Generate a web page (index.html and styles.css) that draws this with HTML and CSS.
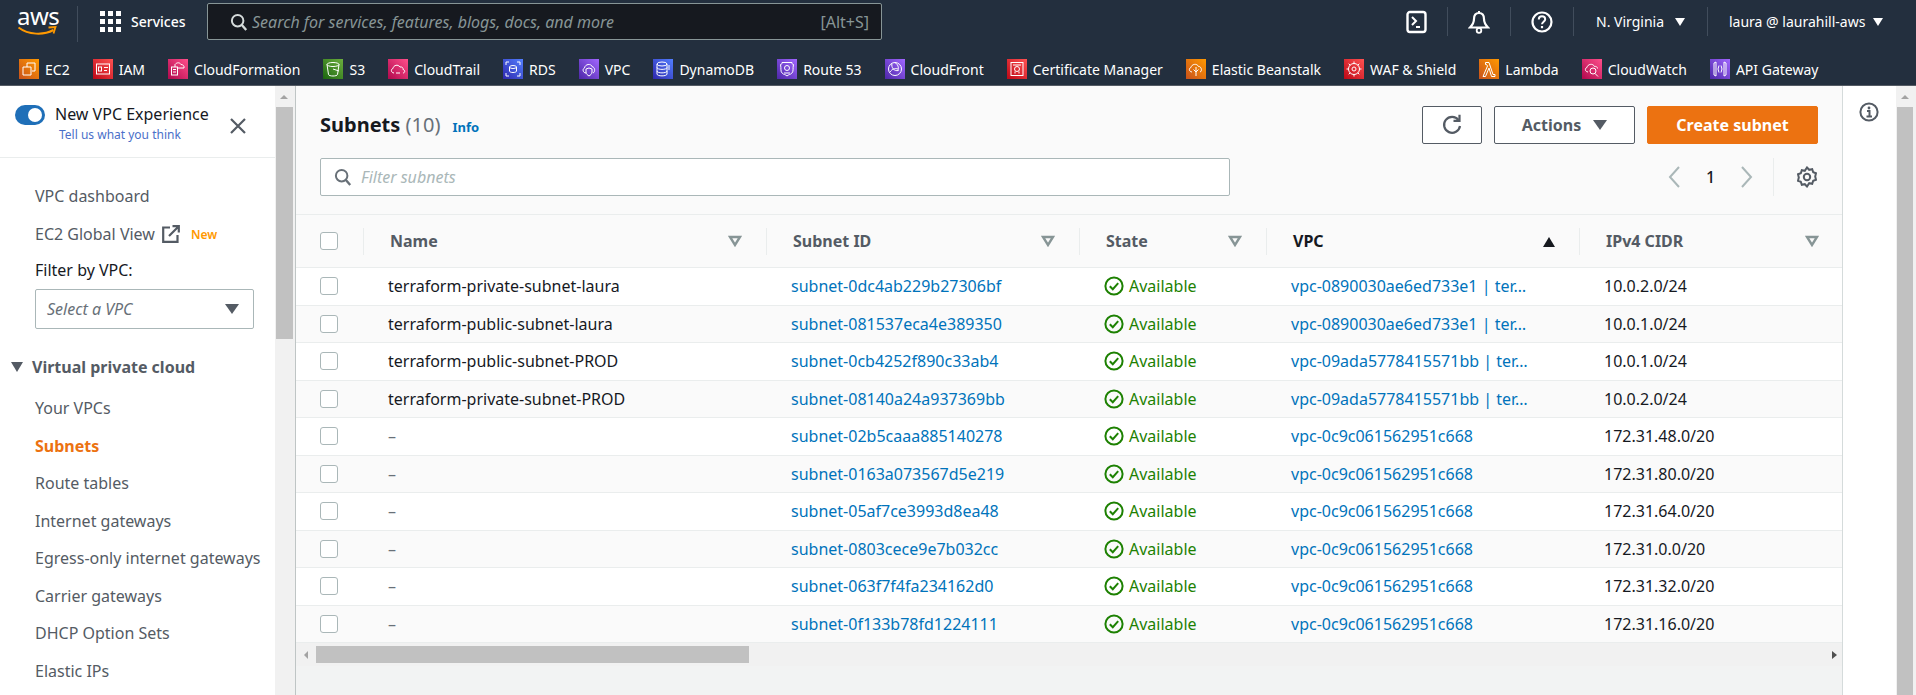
FILE: index.html
```html
<!DOCTYPE html>
<html lang="en">
<head>
    <meta charset="UTF-8">
    <meta name="viewport" content="width=device-width, initial-scale=1.0">
    <title>Subnets | VPC Console</title>
    <link rel="stylesheet" href="styles.css">
</head>
<body>
    <!-- Shared icons -->
    <svg class="sprite" aria-hidden="true">
        <symbol id="i-check" viewBox="0 0 20 20">
            <circle cx="10" cy="10" r="8.6" fill="none" stroke="#1d8102" stroke-width="2"/>
            <path d="M5.8 10.2l3 3 5.4-6" fill="none" stroke="#1d8102" stroke-width="2"/>
        </symbol>
        <symbol id="i-filter" viewBox="0 0 14 12">
            <path d="M2 2h10l-5 8z" fill="none" stroke="#879596" stroke-width="2.4"/>
        </symbol>
        <symbol id="i-search" viewBox="0 0 20 20">
            <circle cx="8.5" cy="8.5" r="6.4" fill="none" stroke="currentColor" stroke-width="2.2"/>
            <path d="M13 13l5 6" fill="none" stroke="currentColor" stroke-width="2.6"/>
        </symbol>
    </svg>

    <!-- Header Section -->
    <header class="top-nav">
        <div class="nav-row">
            <div class="aws-logo">
                <span class="aws-word">aws</span>
                <svg class="aws-smile" viewBox="0 0 40 11">
                    <path d="M1 1.5c10 7.500 25 8 35 2.500" fill="none" stroke="#ff9900" stroke-width="2"/>
                    <path d="M31 1.500l7-.5-2 6.500" fill="none" stroke="#ff9900" stroke-width="1.800"/>
                </svg>
            </div>
            <div class="services">
                <div class="grid-dots">
                    <i></i><i></i><i></i><i></i><i></i><i></i><i></i><i></i><i></i>
                </div>
                <span>Services</span>
            </div>
            <div class="global-search">
                <svg class="search-icon"><use href="#i-search"/></svg>
                <span class="search-text">Search for services, features, blogs, docs, and more</span>
                <span class="search-key">[Alt+S]</span>
            </div>
            <div class="nav-right">
                <div class="nav-icon">
                    <svg width="21" height="24" viewBox="0 0 21 24"><rect x="1.500" y="2" width="18" height="20" rx="2.500" fill="none" stroke="#fff" stroke-width="2.400"/><path d="M6 7l4 4-4 4" fill="none" stroke="#fff" stroke-width="2"/><path d="M10 17h4" stroke="#fff" stroke-width="2"/></svg>
                </div>
                <div class="nav-icon">
                    <svg width="22" height="24" viewBox="0 0 22 24"><path d="M11 3c-3.500 0-5 2.500-5 6 0 4-1.500 6-4 8.500h18c-2.500-2.500-4-4.500-4-8.500 0-3.500-1.500-6-5-6z" fill="none" stroke="#fff" stroke-width="2.200"/><path d="M11 1v2" stroke="#fff" stroke-width="2"/><circle cx="11" cy="20.500" r="2.300" fill="none" stroke="#fff" stroke-width="1.800"/></svg>
                </div>
                <div class="nav-icon">
                    <svg width="22" height="22" viewBox="0 0 22 22"><circle cx="11" cy="11" r="9.500" fill="none" stroke="#fff" stroke-width="2.200"/><path d="M7.800 8.500c0-2 1.400-3.200 3.200-3.200s3.200 1.200 3.200 3c0 2.400-3.200 2.500-3.200 5" fill="none" stroke="#fff" stroke-width="2"/><path d="M11 15v2.200" stroke="#fff" stroke-width="2.200"/></svg>
                </div>
                <div class="nav-menu region"><span>N. Virginia</span><i class="caret-white"></i></div>
                <div class="nav-menu account"><span>laura @ laurahill-aws</span><i class="caret-white"></i></div>
            </div>
        </div>
        <nav class="fav-row">
            <a class="fav fav-ec2"><span class="svc orange"><svg viewBox="0 0 20 20"><path d="M8 4h8v8h-3M4 8h8v8H4z"/><path d="M8 8V4"/></svg></span>EC2</a>
            <a class="fav fav-iam"><span class="svc red"><svg viewBox="0 0 20 20"><rect x="3.500" y="5" width="13" height="10"/><rect x="5.500" y="8" width="3" height="4"/><path d="M11 8.500h4M11 11.500h3"/></svg></span>IAM</a>
            <a class="fav fav-cf"><span class="svc pink"><svg viewBox="0 0 20 20"><rect x="3.500" y="8" width="6" height="8"/><path d="M5 10.500h3M5 13h3M7 8V5.500c2-2.500 5-2 6 0 2 0 3.500 1.500 3 3.500h-6"/></svg></span>CloudFormation</a>
            <a class="fav fav-s3"><span class="svc green"><svg viewBox="0 0 20 20"><ellipse cx="10" cy="5.500" rx="6" ry="2"/><path d="M4 5.500l1.500 10c.5 2 8.500 2 9 0l1.500-10M10 10l6 2"/></svg></span>S3</a>
            <a class="fav fav-trail"><span class="svc pink"><svg viewBox="0 0 20 20"><path d="M6 14c-3 0-3.500-4-1-4.500C5.500 6 10 5 12 8c2-.5 3.500 1 3 2.500 2.500.5 2 3.500 0 3.500"/><path d="M8 14h4"/></svg></span>CloudTrail</a>
            <a class="fav fav-rds"><span class="svc blue"><svg viewBox="0 0 20 20"><ellipse cx="10" cy="8" rx="3.500" ry="1.500"/><path d="M6.500 8v4c0 2 7 2 7 0V8M3 6V3h3M14 3h3v3M3 14v3h3M14 17h3v-3"/></svg></span>RDS</a>
            <a class="fav fav-vpc"><span class="svc purple"><svg viewBox="0 0 20 20"><path d="M7 14c-3 0-4-4-1.500-5C6 5 12 4 13.500 8c2.500 0 3 5 .5 6"/><path d="M10 9l3 1v3c0 2-1.500 3-3 4-1.500-1-3-2-3-4v-3z"/></svg></span>VPC</a>
            <a class="fav fav-ddb"><span class="svc blue"><svg viewBox="0 0 20 20"><ellipse cx="9" cy="5" rx="5" ry="2"/><path d="M4 5v10c0 2.500 10 2.500 10 0V5M4 8.500c0 2.500 10 2.500 10 0M4 12c0 2.500 10 2.500 10 0M16 6v5"/></svg></span>DynamoDB</a>
            <a class="fav fav-r53"><span class="svc purple"><svg viewBox="0 0 20 20"><path d="M5 3.500h10c0 2 1 2 1.500 2-1 4 .5 7-2 9-1 1-3 1-4.500 2.500-1.500-1.500-3.500-1.500-4.500-2.500-2.500-2-1-5-2-9 .5 0 1.500 0 1.500-2z"/><circle cx="10" cy="9" r="2.500"/><path d="M7 14h6"/></svg></span>Route 53</a>
            <a class="fav fav-cfront"><span class="svc purple"><svg viewBox="0 0 20 20"><circle cx="10" cy="10" r="6.500"/><path d="M7 4.500c-1 4 2 8 6.500 7M5 13c2-3 5-4 8-3M10 3.500c3 2 4 5 3 8"/></svg></span>CloudFront</a>
            <a class="fav fav-cert"><span class="svc red"><svg viewBox="0 0 20 20"><rect x="4" y="3.500" width="12" height="13"/><path d="M6 6h8M8 14.500v-2M12 14.500v-2"/><circle cx="10" cy="10" r="2.500"/></svg></span>Certificate Manager</a>
            <a class="fav fav-eb"><span class="svc orange"><svg viewBox="0 0 20 20"><path d="M6 13c-3 0-3.500-4-1-4.500C5.500 5 11 4 12.500 7.500c3-.5 4 5 1.500 5.500"/><path d="M10 8v9M7.500 10.500L10 13l2.500-2.500"/></svg></span>Elastic Beanstalk</a>
            <a class="fav fav-waf"><span class="svc red"><svg viewBox="0 0 20 20"><circle cx="10" cy="10" r="5.500"/><circle cx="10" cy="10" r="2"/><path d="M10 2.500v2.500M10 15v2.500M2.500 10H5M15 10h2.500M4.700 4.700l1.500 1.500M13.800 13.800l1.500 1.500M15.300 4.700l-1.500 1.500M6.200 13.800l-1.500 1.500"/></svg></span>WAF &amp; Shield</a>
            <a class="fav fav-lambda"><span class="svc orange"><svg viewBox="0 0 20 20"><path d="M6.500 3.500h3.500l4 12h2v2h-3.500L10 9l-3.500 8.500H4L8.500 7 7.500 5.500h-1z"/></svg></span>Lambda</a>
            <a class="fav fav-cw"><span class="svc pink"><svg viewBox="0 0 20 20"><path d="M6 13c-3 0-3.500-4-1-4.500C5.500 5 11 4 12.500 7.500c1.500-.5 3 .5 3 2"/><circle cx="11" cy="12" r="3"/><path d="M13 14.500l3 3"/></svg></span>CloudWatch</a>
            <a class="fav fav-api"><span class="svc purple"><svg viewBox="0 0 20 20"><path d="M6 3v14l-2-1V4zM14 3v14l2-1V4zM9 6.500l-1 3.500 1 3.500M11 6.500l1 3.500-1 3.500"/></svg></span>API Gateway</a>
        </nav>
    </header>

    <div class="layout">
        <!-- Side navigation -->
        <aside class="sidebar">
            <div class="experience">
                <div class="experience-left">
                    <div class="toggle"><i></i></div>
                </div>
                <div class="experience-text">
                    <div class="experience-title">New VPC Experience</div>
                    <a class="experience-link">Tell us what you think</a>
                </div>
                <svg class="close" width="16" height="16" viewBox="0 0 16 16"><path d="M1 1l14 14M15 1L1 15" stroke="#545b64" stroke-width="2.200"/></svg>
            </div>
            <ul class="side-list">
                <li>VPC dashboard</li>
                <li class="with-icon">EC2 Global View
                    <svg class="ext-icon" width="18" height="18" viewBox="0 0 18 18"><path d="M8 2.500H1.200v14.300h14.300V10" fill="none" stroke="#545b64" stroke-width="2.200"/><path d="M7 11l9.500-9.500M10.500 1.200h6.300v6.300" fill="none" stroke="#545b64" stroke-width="2.200"/></svg>
                    <span class="new-tag">New</span>
                </li>
            </ul>
            <div class="filter-vpc">
                <label>Filter by VPC:</label>
                <div class="vpc-select"><span>Select a VPC</span><i class="caret-dark"></i></div>
            </div>
            <div class="side-section"><i class="caret-dark"></i>Virtual private cloud</div>
            <ul class="side-list sub">
                <li>Your VPCs</li>
                <li class="active">Subnets</li>
                <li>Route tables</li>
                <li>Internet gateways</li>
                <li>Egress-only internet gateways</li>
                <li>Carrier gateways</li>
                <li>DHCP Option Sets</li>
                <li>Elastic IPs</li>
            </ul>
        </aside>
        <div class="scroll-v side-scroll"><i class="arrow-up"></i><b></b></div>

        <!-- Main content -->
        <main class="content">
            <div class="panel-top">
                <div class="title-row">
                    <h1>Subnets <span class="count">(10)</span></h1>
                    <a class="info">Info</a>
                    <div class="actions">
                        <button class="btn btn-icon">
                            <svg width="22" height="24" viewBox="0 0 22 24"><path d="M17.500 7A8 8 0 1 0 19 13" fill="none" stroke="#545b64" stroke-width="2.200"/><path d="M12.500 7.800h6V1.800" fill="none" stroke="#545b64" stroke-width="2.200"/></svg>
                        </button>
                        <button class="btn btn-actions">Actions<i class="caret-dark"></i></button>
                        <button class="btn btn-primary">Create subnet</button>
                    </div>
                </div>
                <div class="filter-row">
                    <div class="filter-box">
                        <svg class="filter-search"><use href="#i-search"/></svg>
                        <span>Filter subnets</span>
                    </div>
                    <div class="pager">
                        <svg width="14" height="24" viewBox="0 0 14 24"><path d="M12 2L3 12l9 10" fill="none" stroke="#aab7b8" stroke-width="2"/></svg>
                        <span class="page-num">1</span>
                        <svg width="14" height="24" viewBox="0 0 14 24"><path d="M2 2l9 10-9 10" fill="none" stroke="#aab7b8" stroke-width="2"/></svg>
                    </div>
                    <div class="gear">
                        <svg width="20" height="22" viewBox="0 0 20 22"><path d="M10 1.500l2.200 2.300 3-.6 1 3 2.800 1-.8 3.300.8 3.300-2.800 1-1 3-3-.6L10 20.500l-2.200-2.300-3 .6-1-3-2.800-1 .8-3.300-.8-3.300 2.800-1 1-3 3 .6z" fill="none" stroke="#545b64" stroke-width="2"/><circle cx="10" cy="11" r="3.200" fill="none" stroke="#545b64" stroke-width="2"/></svg>
                    </div>
                </div>
            </div>

            <div class="table">
                <div class="thead row">
                    <div class="c-check"><span class="checkbox"></span></div>
                    <div class="th">Name<svg class="filter-mark"><use href="#i-filter"/></svg></div>
                    <div class="th">Subnet ID<svg class="filter-mark"><use href="#i-filter"/></svg></div>
                    <div class="th">State<svg class="filter-mark"><use href="#i-filter"/></svg></div>
                    <div class="th sorted">VPC<i class="sort-up"></i></div>
                    <div class="th">IPv4 CIDR<svg class="filter-mark"><use href="#i-filter"/></svg></div>
                </div>
                <div class="row">
                    <div class="c-check"><span class="checkbox"></span></div>
                    <div class="td">terraform-private-subnet-laura</div>
                    <div class="td"><a>subnet-0dc4ab229b27306bf</a></div>
                    <div class="td state"><svg class="ok"><use href="#i-check"/></svg>Available</div>
                    <div class="td"><a>vpc-0890030ae6ed733e1 | ter…</a></div>
                    <div class="td">10.0.2.0/24</div>
                </div>
                <div class="row">
                    <div class="c-check"><span class="checkbox"></span></div>
                    <div class="td">terraform-public-subnet-laura</div>
                    <div class="td"><a>subnet-081537eca4e389350</a></div>
                    <div class="td state"><svg class="ok"><use href="#i-check"/></svg>Available</div>
                    <div class="td"><a>vpc-0890030ae6ed733e1 | ter…</a></div>
                    <div class="td">10.0.1.0/24</div>
                </div>
                <div class="row">
                    <div class="c-check"><span class="checkbox"></span></div>
                    <div class="td">terraform-public-subnet-PROD</div>
                    <div class="td"><a>subnet-0cb4252f890c33ab4</a></div>
                    <div class="td state"><svg class="ok"><use href="#i-check"/></svg>Available</div>
                    <div class="td"><a>vpc-09ada5778415571bb | ter…</a></div>
                    <div class="td">10.0.1.0/24</div>
                </div>
                <div class="row">
                    <div class="c-check"><span class="checkbox"></span></div>
                    <div class="td">terraform-private-subnet-PROD</div>
                    <div class="td"><a>subnet-08140a24a937369bb</a></div>
                    <div class="td state"><svg class="ok"><use href="#i-check"/></svg>Available</div>
                    <div class="td"><a>vpc-09ada5778415571bb | ter…</a></div>
                    <div class="td">10.0.2.0/24</div>
                </div>
                <div class="row">
                    <div class="c-check"><span class="checkbox"></span></div>
                    <div class="td dash">–</div>
                    <div class="td"><a>subnet-02b5caaa885140278</a></div>
                    <div class="td state"><svg class="ok"><use href="#i-check"/></svg>Available</div>
                    <div class="td"><a>vpc-0c9c061562951c668</a></div>
                    <div class="td">172.31.48.0/20</div>
                </div>
                <div class="row">
                    <div class="c-check"><span class="checkbox"></span></div>
                    <div class="td dash">–</div>
                    <div class="td"><a>subnet-0163a073567d5e219</a></div>
                    <div class="td state"><svg class="ok"><use href="#i-check"/></svg>Available</div>
                    <div class="td"><a>vpc-0c9c061562951c668</a></div>
                    <div class="td">172.31.80.0/20</div>
                </div>
                <div class="row">
                    <div class="c-check"><span class="checkbox"></span></div>
                    <div class="td dash">–</div>
                    <div class="td"><a>subnet-05af7ce3993d8ea48</a></div>
                    <div class="td state"><svg class="ok"><use href="#i-check"/></svg>Available</div>
                    <div class="td"><a>vpc-0c9c061562951c668</a></div>
                    <div class="td">172.31.64.0/20</div>
                </div>
                <div class="row">
                    <div class="c-check"><span class="checkbox"></span></div>
                    <div class="td dash">–</div>
                    <div class="td"><a>subnet-0803cece9e7b032cc</a></div>
                    <div class="td state"><svg class="ok"><use href="#i-check"/></svg>Available</div>
                    <div class="td"><a>vpc-0c9c061562951c668</a></div>
                    <div class="td">172.31.0.0/20</div>
                </div>
                <div class="row">
                    <div class="c-check"><span class="checkbox"></span></div>
                    <div class="td dash">–</div>
                    <div class="td"><a>subnet-063f7f4fa234162d0</a></div>
                    <div class="td state"><svg class="ok"><use href="#i-check"/></svg>Available</div>
                    <div class="td"><a>vpc-0c9c061562951c668</a></div>
                    <div class="td">172.31.32.0/20</div>
                </div>
                <div class="row">
                    <div class="c-check"><span class="checkbox"></span></div>
                    <div class="td dash">–</div>
                    <div class="td"><a>subnet-0f133b78fd1224111</a></div>
                    <div class="td state"><svg class="ok"><use href="#i-check"/></svg>Available</div>
                    <div class="td"><a>vpc-0c9c061562951c668</a></div>
                    <div class="td">172.31.16.0/20</div>
                </div>
            </div>
            <div class="scroll-h"><i class="arrow-left"></i><b></b><i class="arrow-right"></i></div>
        </main>

        <!-- Help panel rail -->
        <div class="help-rail">
            <svg width="20" height="20" viewBox="0 0 20 20"><circle cx="10" cy="10" r="8.600" fill="none" stroke="#545b64" stroke-width="2"/><circle cx="10" cy="6" r="1.400" fill="#545b64"/><path d="M8 9h2.500v5M7.500 14.500h5.500" fill="none" stroke="#545b64" stroke-width="2"/></svg>
        </div>
        <div class="scroll-v page-scroll"><i class="arrow-up"></i><b></b></div>
    </div>
</body>
</html>
```

FILE: styles.css
```css
/* Page basics */
* {
    box-sizing: border-box;
}
html, body {
    height: 695px;
    overflow: hidden;
}
body {
    margin: 0;
    font-family: "Noto Sans", Arial, sans-serif;
    font-size: 16px;
    color: #16191f;
    background-color: #fff;
}
.sprite {
    display: none;
}
ul {
    list-style-type: none;
    margin: 0;
    padding: 0;
}

/* Header Styling */
.top-nav {
    height: 86px;
    background-color: #232f3e;
    border-bottom: 1px solid #545b64;
    color: #fff;
}
.nav-row {
    height: 50px;
    display: flex;
    align-items: flex-start;
    padding-top: 3px;
}
.aws-logo {
    width: 78px;
    height: 36px;
    margin-top: 3px;
    padding-left: 17px;
    border-right: 1px solid #414d5c;
    position: relative;
}
.aws-word {
    display: block;
    font-size: 24px;
    line-height: 20px;
    letter-spacing: -0.5px;
}
.aws-smile {
    display: block;
    width: 41px;
    height: 11px;
}
.services {
    display: flex;
    align-items: center;
    gap: 10px;
    width: 129px;
    height: 37px;
    padding-left: 22px;
    font-size: 14px;
    font-weight: 500;
}
.grid-dots {
    display: grid;
    grid-template-columns: repeat(3, 5px);
    gap: 3px;
}
.grid-dots i {
    width: 5px;
    height: 5px;
    background-color: #fff;
}
.global-search {
    width: 675px;
    height: 37px;
    display: flex;
    align-items: center;
    padding: 0 12px 0 22px;
    background-color: #16191f;
    border: 1px solid #879596;
    border-radius: 2px;
}
.search-icon {
    width: 18px;
    height: 20px;
    color: #d5dbdb;
    flex: none;
}
.search-text {
    margin-left: 4px;
    font-size: 16px;
    font-style: italic;
    color: #879596;
    flex: 1;
}
.search-key {
    font-size: 16px;
    color: #879596;
}
.nav-right {
    margin-left: auto;
    height: 37px;
    display: flex;
    align-items: center;
}
.nav-icon {
    width: 63px;
    height: 29px;
    display: flex;
    align-items: center;
    justify-content: center;
    border-right: 1px solid #414d5c;
}
.nav-menu {
    display: flex;
    align-items: center;
    height: 29px;
    font-size: 14px;
}
.region {
    padding-left: 22px;
    width: 134px;
    justify-content: space-between;
    padding-right: 22px;
    border-right: 1px solid #414d5c;
}
.account {
    padding-left: 21px;
    gap: 8px;
    width: 208px;
}
.caret-white {
    width: 0;
    height: 0;
    border-left: 5px solid transparent;
    border-right: 5px solid transparent;
    border-top: 8px solid #fff;
}
.fav-row {
    height: 35px;
    display: flex;
    align-items: center;
    padding-top: 3px;
    padding-left: 19px;
    gap: 23px;
}
.fav {
    display: flex;
    align-items: center;
    gap: 6px;
    font-size: 14px;
    white-space: nowrap;
}
.svc {
    width: 20px;
    height: 20px;
    flex: none;
}
.svc svg {
    display: block;
    width: 20px;
    height: 20px;
    fill: none;
    stroke: #fff;
    stroke-width: 1;
}
.orange { background: linear-gradient(45deg, #c8511b, #ff9900); }
.red { background: linear-gradient(45deg, #bd0816, #ff5252); }
.pink { background: linear-gradient(45deg, #b0084d, #ff4f8b); }
.green { background: linear-gradient(45deg, #1b660f, #6cae3e); }
.blue { background: linear-gradient(45deg, #2e27ad, #527fff); }
.purple { background: linear-gradient(45deg, #4d27a8, #a166ff); }

/* Page layout */
.layout {
    height: 609px;
    display: flex;
}
.sidebar {
    width: 275px;
    flex: none;
    overflow: hidden;
    color: #545b64;
}
.scroll-v {
    position: relative;
    flex: none;
    background-color: #f1f1f1;
}
.scroll-v b {
    display: block;
    background-color: #c1c1c1;
}
.side-scroll {
    width: 20px;
    padding: 21px 2px 0 1px;
}
.side-scroll b {
    height: 232px;
}
.page-scroll {
    width: 20px;
    padding: 21px 3px 0 1px;
}
.page-scroll b {
    height: 600px;
}
.arrow-up {
    position: absolute;
    top: 9px;
    left: 5px;
    border-left: 4px solid transparent;
    border-right: 4px solid transparent;
    border-bottom: 4px solid #a3a3a3;
}

/* Side navigation */
.experience {
    height: 72px;
    border-bottom: 1px solid #eaeded;
    position: relative;
    display: flex;
    padding: 16px 0 0 15px;
}
.toggle {
    width: 30px;
    height: 20px;
    border-radius: 10px;
    background-color: #1f6fb8;
    position: relative;
    margin-top: 3px;
}
.toggle i {
    position: absolute;
    top: 3px;
    right: 3px;
    width: 14px;
    height: 14px;
    border-radius: 50%;
    background-color: #fff;
}
.experience-text {
    margin-left: 10px;
}
.experience-title {
    color: #16191f;
    line-height: 24px;
}
.experience-link {
    display: block;
    margin-left: 4px;
    font-size: 12px;
    line-height: 18px;
    color: #4a6fc9;
}
.close {
    position: absolute;
    left: 230px;
    top: 32px;
}
.side-list {
    padding-left: 35px;
}
.side-list li {
    padding: 5px 0;
    line-height: 27.5px;
}
.experience + .side-list {
    padding-top: 20px;
}
.with-icon {
    display: flex;
    align-items: center;
}
.ext-icon {
    margin-left: 7px;
}
.new-tag {
    margin-left: 11px;
    font-size: 12px;
    font-weight: 600;
    color: #ff9900;
}
.filter-vpc {
    padding: 4px 21px 0 35px;
}
.filter-vpc label {
    display: block;
    color: #16191f;
    line-height: 27px;
}
.vpc-select {
    height: 40px;
    margin-top: 5px;
    padding: 0 14px 0 11px;
    display: flex;
    align-items: center;
    justify-content: space-between;
    border: 1px solid #aab7b8;
    border-radius: 2px;
    font-style: italic;
    color: #687078;
}
.caret-dark {
    display: block;
    width: 0;
    height: 0;
    border-left: 7px solid transparent;
    border-right: 7px solid transparent;
    border-top: 10px solid #545b64;
}
.side-section {
    margin-top: 24px;
    padding-left: 11px;
    display: flex;
    align-items: center;
    gap: 9px;
    font-weight: 700;
    line-height: 28px;
}
.side-section .caret-dark {
    border-left-width: 6.500px;
    border-right-width: 6.500px;
}
.side-list.sub {
    padding-top: 9px;
}
.side-list .active {
    color: #ec7211;
    font-weight: 700;
}

/* Main content */
.content {
    flex: 1;
    min-width: 0;
    background-color: #f2f3f3;
    border-left: 1px solid #bfc5c5;
    border-right: 1px solid #d5dbdb;
}
.panel-top {
    height: 129px;
    padding: 20px 24px 0 24px;
    background-color: #fafafa;
    border-bottom: 1px solid #eaeded;
}
.title-row {
    display: flex;
    align-items: center;
    height: 38px;
}
h1 {
    margin: 0;
    font-size: 20px;
    font-weight: 700;
    line-height: 38px;
}
.count {
    font-weight: 400;
    color: #687078;
}
.info {
    margin-left: 12px;
    margin-top: 3px;
    font-size: 13px;
    font-weight: 700;
    color: #0073bb;
}
.actions {
    margin-left: auto;
    display: flex;
    gap: 12px;
}
.btn {
    height: 38px;
    font-family: inherit;
    font-size: 16px;
    font-weight: 700;
    border-radius: 2px;
    background-color: #fff;
    color: #545b64;
    border: 1px solid #545b64;
    display: flex;
    align-items: center;
    justify-content: center;
    cursor: pointer;
    padding: 0;
}
.btn-icon {
    width: 60px;
}
.btn-actions {
    width: 141px;
    gap: 12px;
}
.btn-primary {
    width: 171px;
    background-color: #ec7211;
    border-color: #ec7211;
    color: #fff;
}
.filter-row {
    display: flex;
    align-items: center;
    margin-top: 14px;
    height: 38px;
}
.filter-box {
    width: 910px;
    height: 38px;
    padding-left: 13px;
    display: flex;
    align-items: center;
    gap: 9px;
    background-color: #fff;
    border: 1px solid #aab7b8;
    border-radius: 2px;
    font-style: italic;
    color: #aab7b8;
}
.filter-search {
    width: 18px;
    height: 20px;
    color: #687078;
}
.pager {
    margin-left: auto;
    display: flex;
    align-items: center;
    width: 87px;
    justify-content: space-between;
}
.page-num {
    font-weight: 500;
    font-size: 16px;
}
.gear {
    margin-left: 19px;
    height: 38px;
    width: 45px;
    padding-left: 23px;
    display: flex;
    align-items: center;
    border-left: 1px solid #eaeded;
}

/* Subnet table */
.table {
    overflow: hidden;
}
.row {
    display: grid;
    grid-template-columns: 67px 403px 313px 187px 313px 264px;
    height: 37.5px;
    align-items: center;
    background-color: #fff;
    border-bottom: 1px solid #eaeded;
}
.row:nth-child(odd) {
    background-color: #fafafa;
}
.thead, .thead:nth-child(odd) {
    height: 53px;
    background-color: #fafafa;
    border-bottom: 1px solid #eaeded;
    color: #545b64;
    font-weight: 700;
}
.c-check {
    padding-left: 24px;
    display: flex;
    align-items: center;
    height: 27px;
}
.checkbox {
    width: 18px;
    height: 18px;
    background-color: #fff;
    border: 1px solid #aab7b8;
    border-radius: 3px;
}
.th {
    position: relative;
    height: 27px;
    padding-left: 26px;
    line-height: 27px;
    border-left: 1px solid #eaeded;
}
.filter-mark {
    position: absolute;
    right: 24px;
    top: 7px;
    width: 14px;
    height: 12px;
}
.sorted {
    color: #16191f;
}
.sort-up {
    position: absolute;
    right: 24px;
    top: 9px;
    border-left: 6.500px solid transparent;
    border-right: 6.500px solid transparent;
    border-bottom: 10px solid #16191f;
}
.td {
    padding-left: 25px;
    white-space: nowrap;
    overflow: hidden;
}
.td a {
    color: #0073bb;
}
.dash {
    color: #687078;
}
.state {
    display: flex;
    align-items: center;
    gap: 5px;
    color: #1d8102;
}
.ok {
    width: 20px;
    height: 20px;
    flex: none;
}

/* Horizontal scroll bar */
.scroll-h {
    position: relative;
    height: 23px;
    background-color: #f1f1f1;
    padding: 3px 0 0 20px;
}
.scroll-h b {
    display: block;
    width: 433px;
    height: 17px;
    background-color: #c1c1c1;
}
.arrow-left, .arrow-right {
    position: absolute;
    top: 8px;
    border-top: 4px solid transparent;
    border-bottom: 4px solid transparent;
}
.arrow-left {
    left: 8px;
    border-right: 4px solid #a3a3a3;
}
.arrow-right {
    right: 5px;
    border-left: 5px solid #505050;
}

/* Help rail */
.help-rail {
    width: 53px;
    flex: none;
    padding: 16px 0 0 16px;
}
```
